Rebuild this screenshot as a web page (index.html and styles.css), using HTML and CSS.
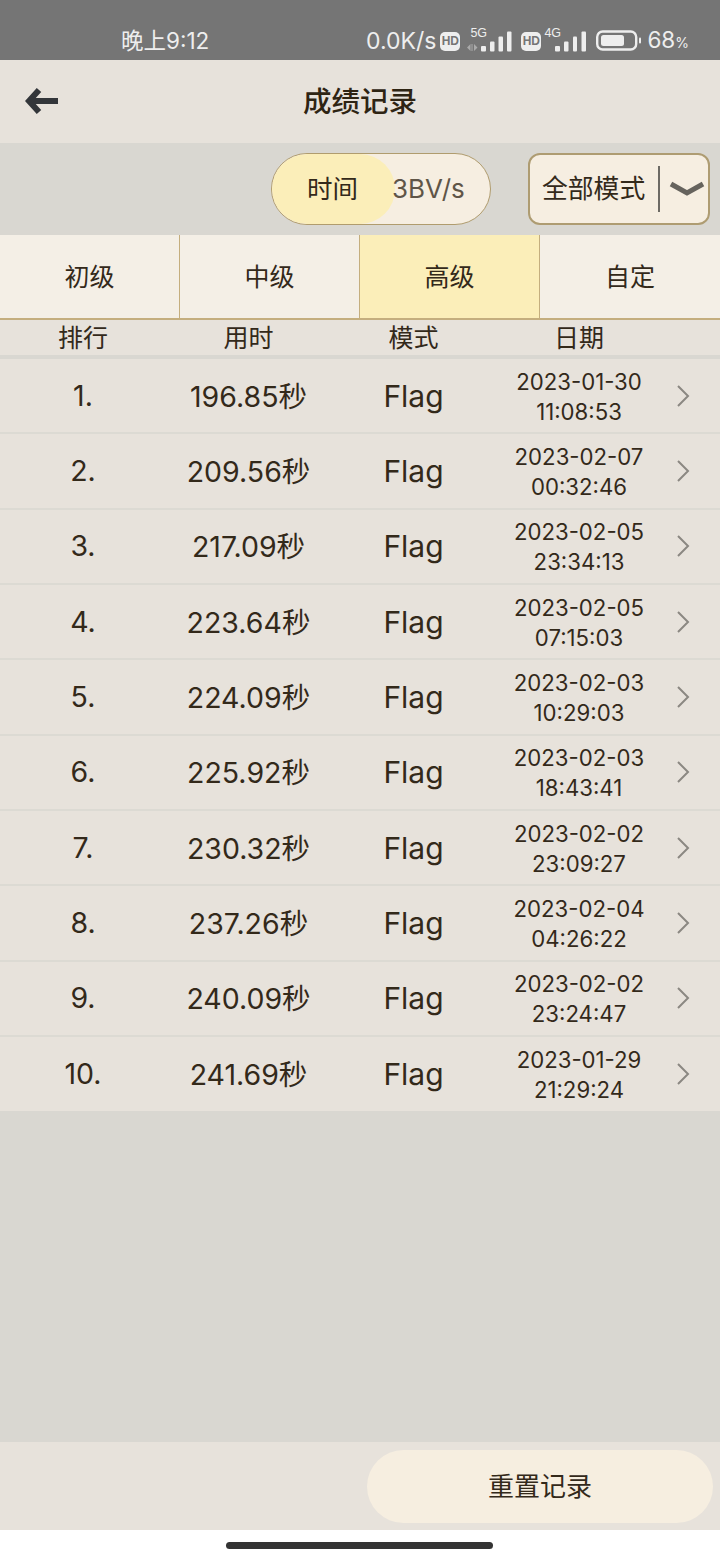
FILE: index.html
```html
<!DOCTYPE html>
<html>
<head>
	<meta charset="utf-8">
	<title>成绩记录</title>
	<link rel="stylesheet" href="styles.css">
</head>
<body>
	<div class="statusbar">
		<span class="clock">晚上9:12</span>
		<div class="status-right">
			<span class="speed">0.0K/s</span>
			<span class="hd">HD</span>
			<span class="signal">
				<span class="net">5G</span>
				<svg width="45" height="22" viewBox="0 0 45 22"><g fill="#aaa"><path d="M0 17.500l3.500-3.500v7zM4.500 14h1v7h-1zM7 14l3.500 3.500L7 21z"/></g><g fill="#eee"><rect x="14" y="16" width="5" height="5.500" rx="1"/><rect x="23" y="11.500" width="4.500" height="10" rx="1"/><rect x="31.500" y="6.500" width="4.500" height="15" rx="1"/><rect x="40" y="1.500" width="4.500" height="20" rx="1"/></g></svg>
			</span>
			<span class="hd">HD</span>
			<span class="signal signal-4g">
				<span class="net">4G</span>
				<svg width="31" height="22" viewBox="0 0 31 22"><g fill="#eee"><rect x="0" y="16" width="5" height="5.500" rx="1"/><rect x="9" y="11.500" width="4.500" height="10" rx="1"/><rect x="18" y="6.500" width="4" height="15" rx="1"/><rect x="26.500" y="1.500" width="4.500" height="20" rx="1"/></g></svg>
			</span>
			<svg class="battery" width="45" height="22" viewBox="0 0 45 22"><rect x="1.200" y="1.500" width="39" height="18" rx="5.500" fill="none" stroke="#eee" stroke-width="2.400"/><rect x="5" y="5" width="23" height="11" rx="2.500" fill="#eee"/><rect x="43" y="7.500" width="2" height="6" rx="1" fill="#eee"/></svg>
			<span class="percent">68<small>%</small></span>
		</div>
	</div>

	<header class="titlebar">
		<svg class="back" width="34" height="26" viewBox="0 0 34 26"><path d="M14 2L4 13l10 11M5 13h28" fill="none" stroke="#33363a" stroke-width="6"/></svg>
		<h1>成绩记录</h1>
	</header>

	<div class="toolbar">
		<div class="toggle">
			<span class="toggle-on">时间</span>
			<span class="toggle-off">3BV/s</span>
		</div>
		<div class="select">
			<span class="select-text">全部模式</span>
			<span class="select-line"></span>
			<svg width="36" height="16" viewBox="0 0 36 16"><path d="M2 3l16 9 16-9" fill="none" stroke="#66635d" stroke-width="5"/></svg>
		</div>
	</div>

	<nav class="tabs">
		<div class="tab">初级</div>
		<div class="tab">中级</div>
		<div class="tab tab-active">高级</div>
		<div class="tab">自定</div>
	</nav>

	<div class="cols">
		<span>排行</span><span>用时</span><span>模式</span><span>日期</span>
	</div>

	<div class="list">
		<div class="row"><span>1.</span><span class="time">196.85秒</span><span class="mode">Flag</span><span class="date">2023-01-30<br>11:08:53</span><svg class="chev" width="14" height="24" viewBox="0 0 14 24"><path d="M2 2l10 10L2 22" fill="none" stroke="#8b8882" stroke-width="2"/></svg></div>
		<div class="row"><span>2.</span><span class="time">209.56秒</span><span class="mode">Flag</span><span class="date">2023-02-07<br>00:32:46</span><svg class="chev" width="14" height="24" viewBox="0 0 14 24"><path d="M2 2l10 10L2 22" fill="none" stroke="#8b8882" stroke-width="2"/></svg></div>
		<div class="row"><span>3.</span><span class="time">217.09秒</span><span class="mode">Flag</span><span class="date">2023-02-05<br>23:34:13</span><svg class="chev" width="14" height="24" viewBox="0 0 14 24"><path d="M2 2l10 10L2 22" fill="none" stroke="#8b8882" stroke-width="2"/></svg></div>
		<div class="row"><span>4.</span><span class="time">223.64秒</span><span class="mode">Flag</span><span class="date">2023-02-05<br>07:15:03</span><svg class="chev" width="14" height="24" viewBox="0 0 14 24"><path d="M2 2l10 10L2 22" fill="none" stroke="#8b8882" stroke-width="2"/></svg></div>
		<div class="row"><span>5.</span><span class="time">224.09秒</span><span class="mode">Flag</span><span class="date">2023-02-03<br>10:29:03</span><svg class="chev" width="14" height="24" viewBox="0 0 14 24"><path d="M2 2l10 10L2 22" fill="none" stroke="#8b8882" stroke-width="2"/></svg></div>
		<div class="row"><span>6.</span><span class="time">225.92秒</span><span class="mode">Flag</span><span class="date">2023-02-03<br>18:43:41</span><svg class="chev" width="14" height="24" viewBox="0 0 14 24"><path d="M2 2l10 10L2 22" fill="none" stroke="#8b8882" stroke-width="2"/></svg></div>
		<div class="row"><span>7.</span><span class="time">230.32秒</span><span class="mode">Flag</span><span class="date">2023-02-02<br>23:09:27</span><svg class="chev" width="14" height="24" viewBox="0 0 14 24"><path d="M2 2l10 10L2 22" fill="none" stroke="#8b8882" stroke-width="2"/></svg></div>
		<div class="row"><span>8.</span><span class="time">237.26秒</span><span class="mode">Flag</span><span class="date">2023-02-04<br>04:26:22</span><svg class="chev" width="14" height="24" viewBox="0 0 14 24"><path d="M2 2l10 10L2 22" fill="none" stroke="#8b8882" stroke-width="2"/></svg></div>
		<div class="row"><span>9.</span><span class="time">240.09秒</span><span class="mode">Flag</span><span class="date">2023-02-02<br>23:24:47</span><svg class="chev" width="14" height="24" viewBox="0 0 14 24"><path d="M2 2l10 10L2 22" fill="none" stroke="#8b8882" stroke-width="2"/></svg></div>
		<div class="row"><span>10.</span><span class="time">241.69秒</span><span class="mode">Flag</span><span class="date">2023-01-29<br>21:29:24</span><svg class="chev" width="14" height="24" viewBox="0 0 14 24"><path d="M2 2l10 10L2 22" fill="none" stroke="#8b8882" stroke-width="2"/></svg></div>
	</div>

	<div class="spacer"></div>

	<footer class="footer">
		<div class="reset">重置记录</div>
	</footer>

	<div class="navbar"><div class="home"></div></div>
</body>
</html>
```

FILE: styles.css
```css
* {
	box-sizing: border-box;
}
html, body {
	margin: 0;
	padding: 0;
}
body {
	width: 720px;
	height: 1560px;
	display: flex;
	flex-direction: column;
	background-color: #d9d7d1;
	color: #33291a;
	font-family: Inter, "Noto Sans CJK SC", sans-serif;
	overflow: hidden;
}

/* status bar */
.statusbar {
	height: 60px;
	flex: none;
	display: flex;
	justify-content: space-between;
	align-items: flex-start;
	padding: 26px 0 0 121px;
	background-color: #757575;
	color: #eeeeee;
}
.clock {
	font-size: 22.500px;
	line-height: 30px;
}
.status-right {
	display: flex;
	align-items: center;
	height: 30px;
	padding-right: 31px;
}
.speed {
	font-size: 23px;
	line-height: 30px;
	margin-right: 4px;
	white-space: nowrap;
}
.hd {
	width: 20px;
	height: 19px;
	border-radius: 5px;
	background-color: #eeeeee;
	color: #757575;
	font-size: 12px;
	font-weight: 700;
	line-height: 19px;
	text-align: center;
	font-family: "Liberation Sans", sans-serif;
}
.signal {
	position: relative;
	display: flex;
	align-items: center;
	margin: 0 9px 0 7px;
}
.signal-4g {
	margin-left: 14px;
	margin-right: 10px;
}
.net {
	position: absolute;
	left: 3px;
	top: -3px;
	font-size: 12.500px;
	line-height: 13px;
	font-family: "Liberation Sans", sans-serif;
}
.signal-4g .net {
	left: -11px;
}
.battery {
	flex: none;
}
.percent {
	margin-left: 6px;
	font-size: 22.500px;
	line-height: 30px;
	white-space: nowrap;
}
.percent small {
	font-size: 14px;
}

/* title */
.titlebar {
	position: relative;
	height: 83px;
	flex: none;
	display: flex;
	align-items: center;
	justify-content: center;
	background-color: #e7e2db;
}
.titlebar h1 {
	margin: 0;
	font-size: 28.500px;
	line-height: 40px;
	font-weight: 500;
	color: #2e2413;
}
.back {
	position: absolute;
	left: 25px;
	top: 28px;
}

/* toggle + select */
.toolbar {
	height: 92px;
	flex: none;
	display: flex;
	justify-content: flex-end;
	align-items: flex-start;
	padding: 10px 10px 0 0;
	gap: 37px;
}
.toggle {
	width: 220px;
	height: 72px;
	display: flex;
	border: 1.500px solid #b09c6e;
	border-radius: 36px;
	background-color: #f6eee1;
	overflow: hidden;
}
.toggle-on {
	width: 123px;
	padding-left: 35px;
	border-radius: 36px;
	background-color: #fbeeb9;
	font-size: 25.500px;
	line-height: 69px;
}
.toggle-off {
	font-size: 26px;
	line-height: 69px;
	color: #5f5547;
	margin-left: -3px;
}
.select {
	width: 182px;
	height: 72px;
	display: flex;
	align-items: center;
	padding-left: 12px;
	border: 2.500px solid #ae9c72;
	border-radius: 12px;
	background-color: #f6eee1;
}
.select-text {
	font-size: 25.800px;
	line-height: 36px;
	white-space: nowrap;
}
.select-line {
	width: 2px;
	height: 46px;
	margin: 0 9px 0 13px;
	background-color: #6d6a64;
}

/* level tabs */
.tabs {
	height: 85px;
	flex: none;
	display: flex;
	border-bottom: 2px solid #c4ae7e;
}
.tab {
	width: 180px;
	display: flex;
	align-items: center;
	justify-content: center;
	background-color: #f4efe6;
	border-right: 1px solid #c4ae7e;
	font-size: 25px;
	line-height: 36px;
}
.tab:last-child {
	border-right: 0;
}
.tab-active {
	background-color: #fbeeb9;
}

/* table */
.cols, .row {
	display: grid;
	grid-template-columns: 166px 165px 165px 166px 58px;
	align-items: center;
	text-align: center;
	background-color: #e7e2db;
}
.cols {
	height: 35px;
	flex: none;
	padding-top: 2px;
	font-size: 25px;
	line-height: 33px;
}
.list {
	margin-top: 4px;
	flex: none;
}
.row {
	height: 75.330px;
	font-size: 28.500px;
	line-height: 36px;
	border-bottom: 2px solid #dcdad3;
}
.row:last-child {
	border-bottom: 0;
	height: 74px;
}
.time {
	padding-top: 2px;
}
.mode {
	font-size: 30px;
}
.date {
	padding-top: 2px;
	font-size: 22.200px;
	line-height: 30px;
}
.chev {
	margin-left: 14px;
}

.spacer {
	flex: 1;
}

/* bottom */
.footer {
	height: 88px;
	flex: none;
	display: flex;
	justify-content: flex-end;
	align-items: flex-start;
	padding: 8px 7px 0 0;
	background-color: #e7e2db;
}
.reset {
	width: 346px;
	height: 73px;
	border-radius: 37px;
	background-color: #f6eee0;
	text-align: center;
	font-size: 26px;
	line-height: 73px;
}
.navbar {
	height: 30px;
	flex: none;
	padding: 12px 0 0 226px;
	background-color: #ffffff;
}
.home {
	width: 267px;
	height: 7px;
	border-radius: 4px;
	background-color: #333333;
}
```
